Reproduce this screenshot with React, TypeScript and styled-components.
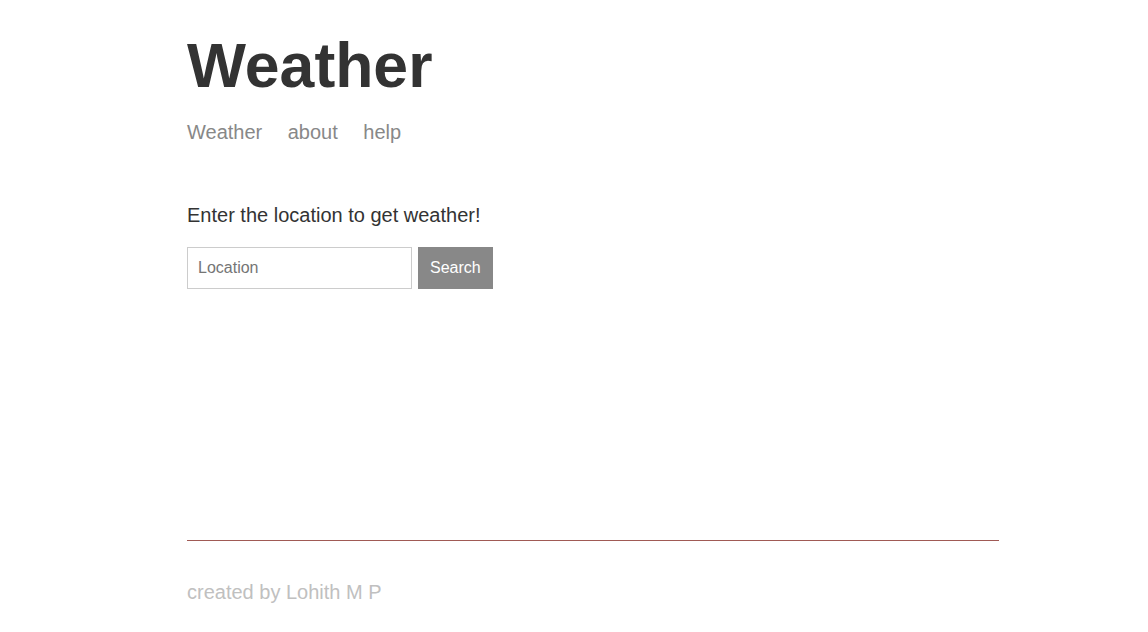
import React from "react";
import styled, { createGlobalStyle } from "styled-components";

const Global = createGlobalStyle`
  html, body { margin: 0; padding: 0; background: #ffffff; }
  body { font-family: "Liberation Sans", Arial, sans-serif; color: #333333; }
  * { box-sizing: border-box; }
`;

const Page = styled.div`
  display: flex;
  flex-direction: column;
  min-height: 100vh;
  width: 812px;
  margin-left: 187px;
`;

const Header = styled.header`
  padding-top: 28px;
`;

const Title = styled.h1`
  margin: 0;
  font-size: 62.5px;
  font-weight: 700;
  line-height: 74px;
  color: #333333;
`;

const Nav = styled.nav`
  display: flex;
  gap: 25.5px;
  margin-top: 19px;
`;

const NavLink = styled.a`
  font-size: 20px;
  line-height: 23px;
  color: #888888;
  text-decoration: none;
`;

const Main = styled.main`
  flex-grow: 1;
  padding-top: 60px;
`;

const Prompt = styled.p`
  margin: 0;
  font-size: 20px;
  line-height: 23px;
  color: #333333;
`;

const Form = styled.form`
  display: flex;
  gap: 6px;
  margin-top: 20px;
`;

const Input = styled.input`
  width: 225px;
  height: 42px;
  padding: 0 10px;
  border: 1px solid #cccccc;
  font-family: "Liberation Sans", Arial, sans-serif;
  font-size: 16px;
  color: #333333;
  outline: none;
  &::placeholder { color: #757575; }
`;

const Button = styled.button`
  height: 42px;
  padding: 0 11px;
  border: 1px solid #888888;
  background: #888888;
  color: #ffffff;
  font-family: "Liberation Sans", Arial, sans-serif;
  font-size: 16px;
  cursor: pointer;
`;

const Footer = styled.footer`
  border-top: 1px solid #a05a55;
  padding: 40px 0 28px;
  font-size: 20px;
  line-height: 23px;
  color: #c0c0c0;
`;

export default function App() {
  return (
    <>
      <Global />
      <Page>
        <Header>
          <Title>Weather</Title>
          <Nav>
            <NavLink href="#">Weather</NavLink>
            <NavLink href="#">about</NavLink>
            <NavLink href="#">help</NavLink>
          </Nav>
        </Header>
        <Main>
          <Prompt>Enter the location to get weather!</Prompt>
          <Form onSubmit={(e) => e.preventDefault()}>
            <Input placeholder="Location" />
            <Button type="submit">Search</Button>
          </Form>
        </Main>
        <Footer>created by Lohith M P</Footer>
      </Page>
    </>
  );
}
